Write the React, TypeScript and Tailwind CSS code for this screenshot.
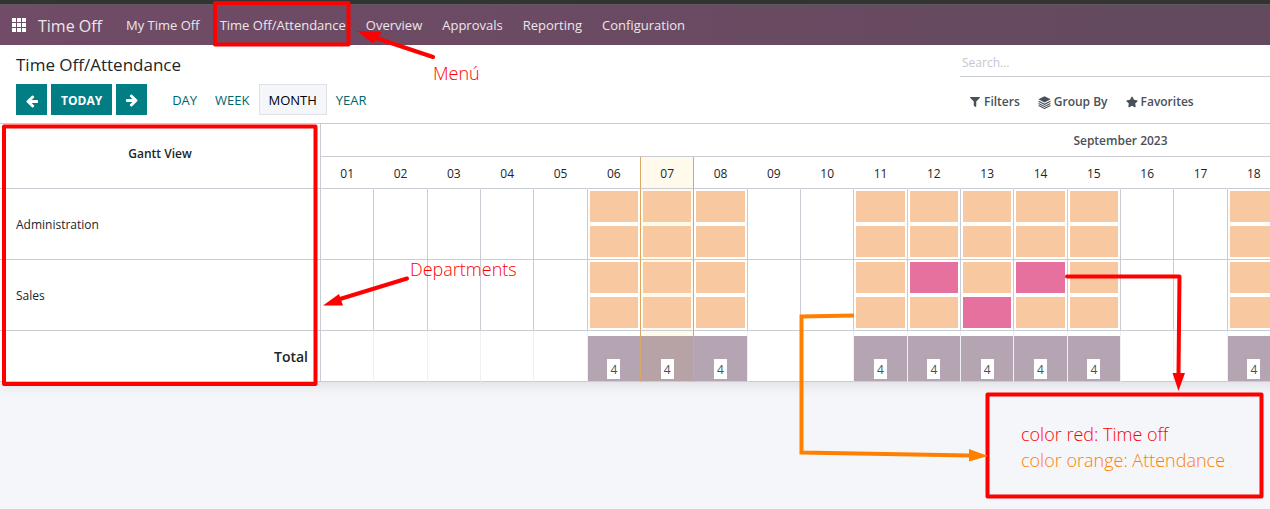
import React from "react";
import { FaFilter, FaStar } from "react-icons/fa";

const MENU = ["My Time Off", "Time Off/Attendance", "Overview", "Approvals", "Reporting", "Configuration"];
const SCALES = ["Day", "Week", "Month", "Year"];
const DAYS = Array.from({ length: 30 }, (_, i) => i + 1);
const TODAY = 7;
const WORKED = [6, 7, 8, 11, 12, 13, 14, 15, 18];

type Department = { name: string; lanes: { timeOff: number[] }[] };

const DEPARTMENTS: Department[] = [
  { name: "Administration", lanes: [{ timeOff: [] }, { timeOff: [] }] },
  { name: "Sales", lanes: [{ timeOff: [12, 14] }, { timeOff: [13] }] },
];

const ROW = "grid grid-cols-[320px_repeat(30,minmax(0,1fr))]";

function cellTone(day: number, line: string) {
  const edge = day === TODAY || day === TODAY + 1 ? "border-l-[#dca665]" : line;
  return `${edge} ${day === TODAY ? "bg-[#fffaeb]" : ""}`;
}

function ArrowIcon({ flip = false }: { flip?: boolean }) {
  return (
    <svg viewBox="0 0 1792 1792" className={flip ? "h-[14px] w-[14px] rotate-180" : "h-[14px] w-[14px]"} fill="currentColor" aria-hidden="true">
      <path d="M1664 896v128q0 53-32.500 90.500t-84.500 37.500h-704l293 294q38 36 38 90t-38 90l-75 76q-37 37-90 37-52 0-91-37l-651-652q-37-37-37-90 0-52 37-91l651-650q38-38 91-38 52 0 90 38l75 74q38 38 38 91t-38 91l-293 293h704q52 0 84.500 37.500t32.500 90.500z" />
    </svg>
  );
}

function StackIcon() {
  return (
    <svg viewBox="0 0 14 14" className="h-[13px] w-[13px]" aria-hidden="true">
      <path d="M7 0.3 13.6 3.6 7 6.9 0.4 3.6Z" fill="currentColor" />
      <path
        d="M0.6 5.7 7 8.9 13.4 5.7M0.6 8 7 11.2 13.4 8M0.6 10.2 7 13.4 13.4 10.2"
        fill="none"
        stroke="currentColor"
        strokeWidth="1.2"
      />
    </svg>
  );
}

function AppsIcon() {
  return (
    <svg viewBox="0 0 14 14" className="h-[14px] w-[14px]" fill="currentColor" aria-hidden="true">
      {[0, 5, 10].map((y) => [0, 5, 10].map((x) => <rect key={`${x}-${y}`} x={x} y={y} width="4" height="4" />))}
    </svg>
  );
}

function Navbar() {
  return (
    <header className="border-t-4 border-[#333333]">
      <nav className="flex h-[41px] items-center border-t border-[#5c5c5c] bg-linear-to-r from-[#714b67] to-[#634a5e] text-[13px] text-[#ece6ea]">
        <button type="button" aria-label="Apps" className="px-3 text-white">
          <AppsIcon />
        </button>
        <a href="#time-off" className="mr-6 pt-[2px] text-[16px]">
          Time Off
        </a>
        <div className="flex gap-5 pt-[2px]">
          {MENU.map((item) => (
            <a key={item} href="#menu" className="whitespace-nowrap">
              {item}
            </a>
          ))}
        </div>
      </nav>
    </header>
  );
}

function ControlPanel() {
  return (
    <section className="flex justify-between bg-white">
      <div className="pt-2 pb-2 pl-4">
        <h1 className="text-[17px] leading-6 text-[#212529]">Time Off/Attendance</h1>
        <div className="mt-[7px] flex text-[13px] font-semibold">
          <div className="flex gap-1 text-white">
            <button type="button" aria-label="Previous" className="flex h-[31px] w-[31px] items-center justify-center bg-[#017e84] pt-[2px]">
              <ArrowIcon />
            </button>
            <button type="button" className="h-[31px] bg-[#017e84] px-[10px] pt-[2px] text-[12px] font-bold uppercase">
              Today
            </button>
            <button type="button" aria-label="Next" className="flex h-[31px] w-[31px] items-center justify-center bg-[#017e84] pt-[2px]">
              <ArrowIcon flip />
            </button>
          </div>
          <div className="ml-4 flex">
            {SCALES.map((scale) => (
              <button
                key={scale}
                type="button"
                className={
                  scale === "Month"
                    ? "h-[31px] border border-[#dfe1e8] bg-[#f5f6fa] px-[9px] pt-[2px] font-medium text-black uppercase"
                    : "h-[31px] border border-transparent px-2 pt-[2px] font-medium text-[#01666b] uppercase"
                }
              >
                {scale}
              </button>
            ))}
          </div>
        </div>
      </div>
      <div className="w-[310px] text-[12px]">
        <input
          type="text"
          aria-label="Search"
          placeholder="Search..."
          className="mt-1 block h-7 w-full border-b border-[#c9ccd2] bg-transparent px-[2px] pb-[1px] outline-none placeholder:text-[#c5c7cf]"
        />
        <div className="mt-4 flex gap-[18px] pl-[10px] font-semibold text-[#495057]">
          <button type="button" className="flex items-center gap-1">
            <FaFilter size={10} />
            Filters
          </button>
          <button type="button" className="flex items-center gap-[3px]">
            <StackIcon />
            Group By
          </button>
          <button type="button" className="flex items-center gap-[3px]">
            <FaStar size={12} />
            Favorites
          </button>
        </div>
      </div>
    </section>
  );
}

function Gantt() {
  return (
    <div className="overflow-x-auto overflow-y-hidden pb-6 [scrollbar-width:none]">
      <table className="block w-[1920px] border-t border-[#c9ccd2] bg-white text-[12px] text-[#212529] shadow-[0_4px_12px_rgba(0,0,0,0.09)]">
        <thead className={ROW}>
          <tr className="contents">
            <th scope="col" rowSpan={2} className="row-span-2 flex items-center justify-center border-b border-[#c9ccd2] pb-1 font-semibold">
              Gantt View
            </th>
            <th
              scope="colgroup"
              colSpan={30}
              className="flex h-[33px] items-center justify-center border-b border-l border-[#c9ccd2] pt-[2px] font-semibold text-[#495057] [grid-column:2/-1]"
            >
              September 2023
            </th>
          </tr>
          <tr className="contents">
            {DAYS.map((day) => (
              <th
                key={day}
                scope="col"
                className={`flex h-8 items-center justify-center border-b border-l border-b-[#c9ccd2] pt-[2px] font-normal ${cellTone(
                  day,
                  day === 1 ? "border-l-[#c9ccd2]" : "border-l-transparent",
                )}`}
              >
                {String(day).padStart(2, "0")}
              </th>
            ))}
          </tr>
        </thead>
        <tbody className="block">
          {DEPARTMENTS.map((dept) => (
            <tr key={dept.name} className={ROW}>
              <th scope="row" className="flex items-center border-b border-[#c9ccd2] pt-[2px] pl-4 font-normal">
                {dept.name}
              </th>
              {DAYS.map((day) => (
                <td
                  key={day}
                  className={`flex h-[71px] flex-col gap-1 border-b border-l border-b-[#c9ccd2] p-[2px] ${cellTone(day, "border-l-[#c9ccd2]")}`}
                >
                  {WORKED.includes(day) &&
                    dept.lanes.map((lane, i) => (
                      <div key={i} className={lane.timeOff.includes(day) ? "flex-1 bg-[#e6719f]" : "flex-1 bg-[#f8c8a0]"} />
                    ))}
                </td>
              ))}
            </tr>
          ))}
        </tbody>
        <tfoot className="block">
          <tr className={ROW}>
            <th scope="row" className="flex items-center justify-end border-b border-[#c9ccd2] pr-3 text-[14px] font-semibold">
              Total
            </th>
            {DAYS.map((day) => (
              <td
                key={day}
                className={`h-[51px] border-b border-l border-b-[#c9ccd2] pt-[5px] ${cellTone(
                  day,
                  day === 1 ? "border-l-[#c9ccd2]" : "border-l-[#f0f0f3]",
                )}`}
              >
                {WORKED.includes(day) && (
                  <div
                    className={`flex h-[45px] items-end justify-center pb-[2px] ${day === TODAY ? "bg-[#b7a3a6]" : "bg-[#b5a4b2]"}`}
                  >
                    <span className="h-5 bg-white px-[3px] leading-[22px] text-[#495057]">4</span>
                  </div>
                )}
              </td>
            ))}
          </tr>
        </tfoot>
      </table>
    </div>
  );
}

function Annotations() {
  return (
    <div className="pointer-events-none">
      <svg className="absolute top-0 left-0 h-[509px] w-[1270px]" viewBox="0 0 1270 509" fill="none" strokeWidth="4" aria-hidden="true">
        <g stroke="#ff0000" strokeLinejoin="round" strokeLinecap="round">
          <rect x="215" y="3" width="133.500" height="41.500" />
          <rect x="4" y="126.500" width="311.500" height="257.500" />
          <rect x="987.500" y="394.500" width="274" height="102" />
          <path d="M433 57 376 38M407 278.500 340 299M1067 276.500H1179.500L1178.500 374" />
        </g>
        <g fill="#ff0000">
          <path d="M357 31 382 32 373 43.500Z" />
          <path d="M323 305.500 339 294 343 305.500Z" />
          <path d="M1172.500 373H1185L1178.500 391Z" />
        </g>
        <path d="M854 315.500 801.500 316.500V452.500L970 455.500" stroke="#ff8000" />
        <path d="M969 449V461.500L988 456Z" fill="#ff8000" />
      </svg>
      <p className="absolute top-[61px] left-[433px] text-[18px] leading-6 font-light text-[#ff0000]">Menú</p>
      <p className="absolute top-[257px] left-[410px] text-[18px] leading-6 font-light text-[#ff0000]">Departments</p>
      <div className="absolute top-[421px] left-[1021px] text-[18px] leading-[26px] font-light whitespace-nowrap">
        <p className="text-[#ff0000]">color red: Time off</p>
        <p className="text-[#ff8000]">color orange: Attendance</p>
      </div>
    </div>
  );
}

export default function App() {
  return (
    <div className="relative min-h-screen overflow-hidden bg-[#f5f6fa] font-['Open_Sans','Noto_Sans',sans-serif]">
      <Navbar />
      <ControlPanel />
      <Gantt />
      <Annotations />
    </div>
  );
}
